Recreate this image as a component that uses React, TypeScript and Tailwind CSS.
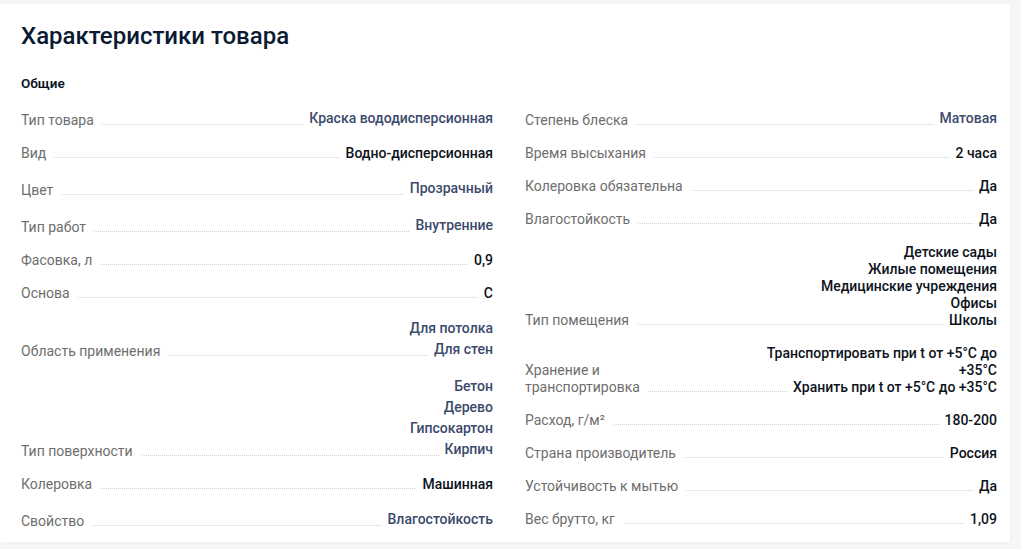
type Spec = {
  label: string[];
  values: string[];
  link?: boolean;
};

const left: Spec[] = [
  { label: ["Тип товара"], values: ["Краска вододисперсионная"], link: true },
  { label: ["Вид"], values: ["Водно-дисперсионная"] },
  { label: ["Цвет"], values: ["Прозрачный"], link: true },
  { label: ["Тип работ"], values: ["Внутренние"], link: true },
  { label: ["Фасовка, л"], values: ["0,9"] },
  { label: ["Основа"], values: ["С"] },
  { label: ["Область применения"], values: ["Для потолка", "Для стен"], link: true },
  { label: ["Тип поверхности"], values: ["Бетон", "Дерево", "Гипсокартон", "Кирпич"], link: true },
  { label: ["Колеровка"], values: ["Машинная"] },
  { label: ["Свойство"], values: ["Влагостойкость"], link: true },
];

const right: Spec[] = [
  { label: ["Степень блеска"], values: ["Матовая"], link: true },
  { label: ["Время высыхания"], values: ["2 часа"] },
  { label: ["Колеровка обязательна"], values: ["Да"] },
  { label: ["Влагостойкость"], values: ["Да"] },
  {
    label: ["Тип помещения"],
    values: ["Детские сады", "Жилые помещения", "Медицинские учреждения", "Офисы", "Школы"],
  },
  {
    label: ["Хранение и", "транспортировка"],
    values: ["Транспортировать при t от +5°C до", "+35°C", "Хранить при t от +5°C до +35°C"],
  },
  { label: ["Расход, г/м²"], values: ["180-200"] },
  { label: ["Страна производитель"], values: ["Россия"] },
  { label: ["Устойчивость к мытью"], values: ["Да"] },
  { label: ["Вес брутто, кг"], values: ["1,09"] },
];

function Row({ label, values, link }: Spec) {
  return (
    <div className="relative flex items-end justify-between">
      {/* dotted leader runs under everything, texts mask it */}
      <div className="absolute right-0 bottom-[4px] left-0 border-b border-dotted border-[#d2d2d2]" />
      <div className="relative shrink-0 bg-white pr-[8px] text-[14px] leading-[17px] text-[#6e6e6e]">
        {label.map((l) => (
          <div key={l}>{l}</div>
        ))}
      </div>
      <div className="relative text-right text-[14px] font-medium">
        {values.map((v) => (
          <div
            key={v}
            className={link ? "leading-[21px] text-[#3c4a6c]" : "leading-[17px] text-[#0d1320]"}
          >
            <span className="bg-white pl-[6px]">{v}</span>
          </div>
        ))}
      </div>
    </div>
  );
}

export default function App() {
  return (
    <div className="min-h-[549px] bg-[#f6f6f6] pt-[4px] pr-[11px] font-['Roboto',sans-serif]">
      <div className="h-[538px] bg-white pl-[21px] pr-[13px] pt-[20px] shadow-[0_0_4px_rgba(0,0,0,0.04)]">
        <h2 className="text-[24px] leading-[24px] font-medium text-[#0b1a33]">Характеристики товара</h2>
        <h3 className="mt-[27px] text-[13.5px] leading-[16px] font-semibold text-[#0b1424]">Общие</h3>
        <div className="mt-[17px] grid grid-cols-2 items-start gap-x-[32px]">
          <div className="flex flex-col gap-[16px]">
            {left.map((r) => (
              <Row key={r.label.join()} {...r} />
            ))}
          </div>
          <div className="flex flex-col gap-[16px]">
            {right.map((r) => (
              <Row key={r.label.join()} {...r} />
            ))}
          </div>
        </div>
      </div>
    </div>
  );
}
